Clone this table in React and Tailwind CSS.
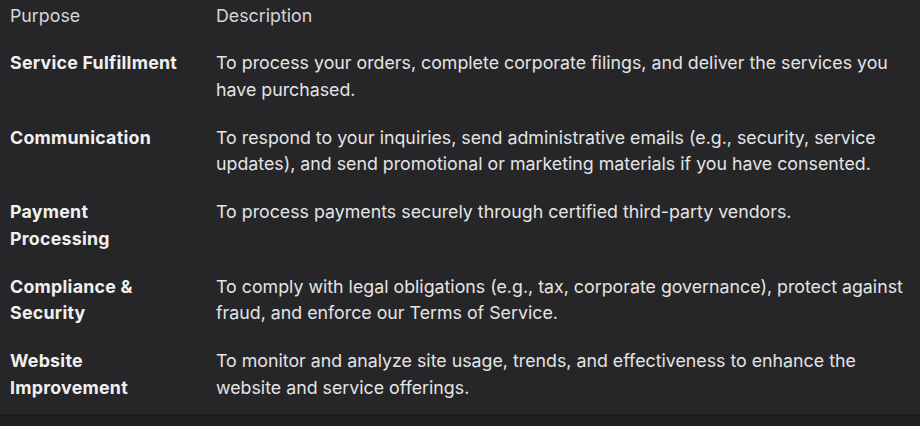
const rows = [
  {
    purpose: 'Service Fulfillment',
    description:
      'To process your orders, complete corporate filings, and deliver the services you have purchased.',
  },
  {
    purpose: 'Communication',
    description:
      'To respond to your inquiries, send administrative emails (e.g., security, service updates), and send promotional or marketing materials if you have consented.',
  },
  {
    purpose: 'Payment Processing',
    description: 'To process payments securely through certified third-party vendors.',
  },
  {
    purpose: 'Compliance & Security',
    description:
      'To comply with legal obligations (e.g., tax, corporate governance), protect against fraud, and enforce our Terms of Service.',
  },
  {
    purpose: 'Website Improvement',
    description:
      'To monitor and analyze site usage, trends, and effectiveness to enhance the website and service offerings.',
  },
];

export default function App() {
  return (
    <div className="min-h-screen bg-[#202022] font-['Inter',sans-serif]">
      <div className="bg-[#262628] h-[414px] border-b-[3px] border-[#1b1b1d] box-content">
        <table className="w-full border-collapse text-[17.8px] leading-[26.25px]">
          <thead>
            <tr className="text-left text-[#d6d6d6] font-normal">
              <th className="font-normal pl-[10px] pt-[3px] pb-[10px] w-[216px]">Purpose</th>
              <th className="font-normal pt-[3px] pb-[10px] pr-[10px]">Description</th>
            </tr>
          </thead>
          <tbody>
            {rows.map((row) => (
              <tr key={row.purpose} className="align-top">
                <td className="pl-[10px] pr-[26px] py-[11px] font-bold tracking-[0.25px] text-[#f0f0f0]">
                  {row.purpose}
                </td>
                <td className="py-[11px] pr-[10px] text-[#e4e4e4]">{row.description}</td>
              </tr>
            ))}
          </tbody>
        </table>
      </div>
    </div>
  );
}
